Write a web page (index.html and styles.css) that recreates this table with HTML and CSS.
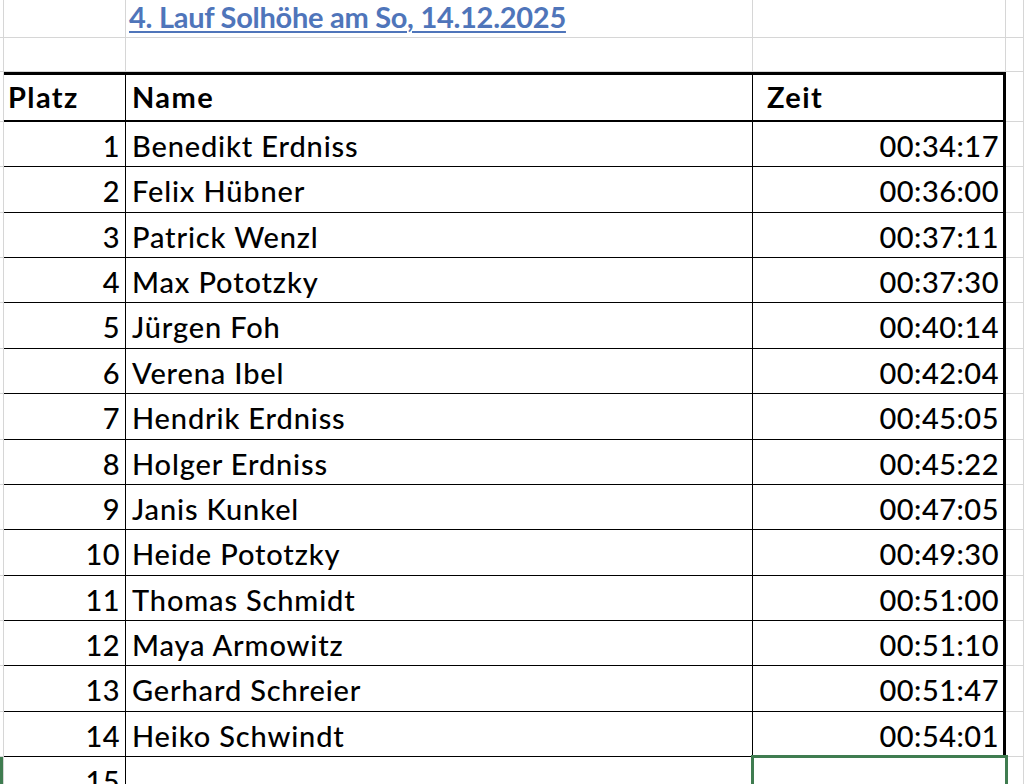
FILE: index.html
```html
<!DOCTYPE html>
<html lang="de">
<head>
<meta charset="utf-8">
<title>4. Lauf Solhöhe</title>
<link rel="stylesheet" href="styles.css">
</head>
<body>
<div class="sheet">
  <div class="row r-title">
    <div class="c rh"></div><div class="c a"></div><div class="c b title"><span class="link">4. Lauf Solhöhe am So, 14.12.2025</span></div><div class="c z"></div><div class="c d"></div>
  </div>
  <div class="row r-blank">
    <div class="c rh"></div><div class="c a"></div><div class="c b"></div><div class="c z"></div><div class="c d"></div>
  </div>
  <div class="row r-head">
    <div class="c rh"></div><div class="c a">Platz</div><div class="c b">Name</div><div class="c z">Zeit</div><div class="c d"></div>
  </div>
  <div class="row dr"><div class="c rh"></div><div class="c a">1</div><div class="c b">Benedikt Erdniss</div><div class="c z">00:34:17</div><div class="c d"></div></div>
  <div class="row dr"><div class="c rh"></div><div class="c a">2</div><div class="c b">Felix Hübner</div><div class="c z">00:36:00</div><div class="c d"></div></div>
  <div class="row dr"><div class="c rh"></div><div class="c a">3</div><div class="c b">Patrick Wenzl</div><div class="c z">00:37:11</div><div class="c d"></div></div>
  <div class="row dr"><div class="c rh"></div><div class="c a">4</div><div class="c b">Max Pototzky</div><div class="c z">00:37:30</div><div class="c d"></div></div>
  <div class="row dr"><div class="c rh"></div><div class="c a">5</div><div class="c b">Jürgen Foh</div><div class="c z">00:40:14</div><div class="c d"></div></div>
  <div class="row dr"><div class="c rh"></div><div class="c a">6</div><div class="c b">Verena Ibel</div><div class="c z">00:42:04</div><div class="c d"></div></div>
  <div class="row dr"><div class="c rh"></div><div class="c a">7</div><div class="c b">Hendrik Erdniss</div><div class="c z">00:45:05</div><div class="c d"></div></div>
  <div class="row dr"><div class="c rh"></div><div class="c a">8</div><div class="c b">Holger Erdniss</div><div class="c z">00:45:22</div><div class="c d"></div></div>
  <div class="row dr"><div class="c rh"></div><div class="c a">9</div><div class="c b">Janis Kunkel</div><div class="c z">00:47:05</div><div class="c d"></div></div>
  <div class="row dr"><div class="c rh"></div><div class="c a">10</div><div class="c b">Heide Pototzky</div><div class="c z">00:49:30</div><div class="c d"></div></div>
  <div class="row dr"><div class="c rh"></div><div class="c a">11</div><div class="c b">Thomas Schmidt</div><div class="c z">00:51:00</div><div class="c d"></div></div>
  <div class="row dr"><div class="c rh"></div><div class="c a">12</div><div class="c b">Maya Armowitz</div><div class="c z">00:51:10</div><div class="c d"></div></div>
  <div class="row dr"><div class="c rh"></div><div class="c a">13</div><div class="c b">Gerhard Schreier</div><div class="c z">00:51:47</div><div class="c d"></div></div>
  <div class="row dr"><div class="c rh"></div><div class="c a">14</div><div class="c b">Heiko Schwindt</div><div class="c z">00:54:01</div><div class="c d"></div></div>
  <div class="row dr last"><div class="c rh"></div><div class="c a">15</div><div class="c b"></div><div class="c z sel"></div><div class="c d"></div></div>
</div>
</body>
</html>
```
FILE: styles.css
```css
html, body {
  margin: 0;
  padding: 0;
  background: #ffffff;
  overflow: hidden;
}

.sheet {
  height: 784px;
  overflow: hidden;
  font-family: Lato, "Liberation Sans", sans-serif;
  font-size: 29px;
  font-weight: 500;
  line-height: 34px;
  color: #000;
}

.row {
  display: grid;
  grid-template-columns: 4px 122px 627px 253px 1fr;
}

.c {
  box-sizing: border-box;
  border-right: 1px solid #d6d6d6;
  border-bottom: 1px solid #d6d6d6;
  white-space: nowrap;
  overflow: visible;
}

.r-title { height: 38px; }
.r-blank { height: 34px; }
.r-head { height: 50px; }
.dr { height: 45.36px; }

.title {
  padding-left: 3px;
  padding-top: 0;
  font-weight: 700;
  letter-spacing: -0.28px;
  color: #4f75ba;
}

.link {
  text-decoration: underline;
  text-decoration-thickness: 2px;
  text-underline-offset: 3px;
}

/* header row */
.r-head .a,
.r-head .b,
.r-head .z {
  border-top: 3px solid #000;
  border-bottom: 2px solid #000;
  border-right: 1px solid #000;
  font-weight: 700;
  letter-spacing: 1.4px;
  padding-top: 5px;
}
.r-head .a { padding-left: 4px; }
.r-head .b { padding-left: 6px; }
.r-head .z { padding-left: 14px; border-right: 3px solid #000; }

/* data rows */
.dr .a,
.dr .b,
.dr .z {
  border-right: 1px solid #000;
  border-bottom: 1px solid #000;
  padding-top: 7px;
}
.dr .a { text-align: right; padding-right: 5px; letter-spacing: 0.4px; }
.dr .b { padding-left: 6px; letter-spacing: 0.85px; }
.dr .z { text-align: right; padding-right: 4px; letter-spacing: 0.5px; border-right: 3px solid #000; }

.last .rh { background: #3f7c50; }
.last .z {
  border-right: 1px solid #d6d6d6;
  border-bottom: none;
}
.sel {
  outline: 3px solid #3f7c50;
  outline-offset: -1px;
}
```
